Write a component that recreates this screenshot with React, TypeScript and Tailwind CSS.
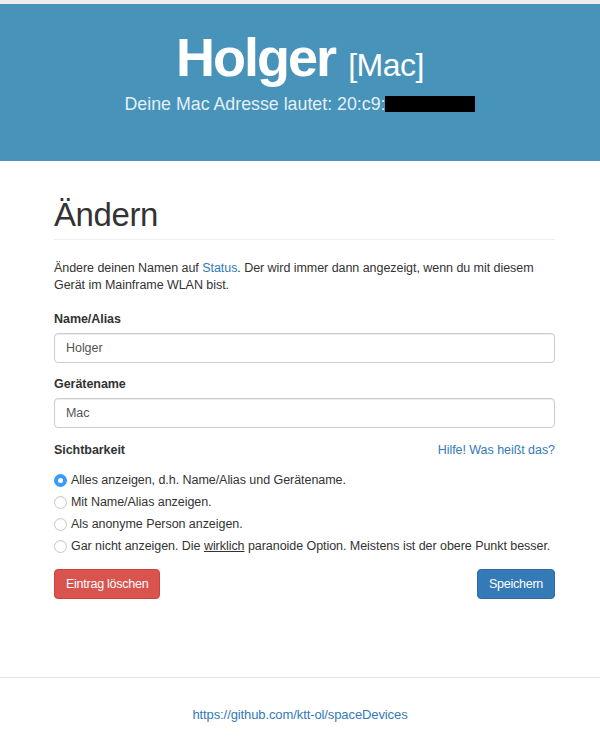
import React from "react";

export default function App() {
  const options = [
    { label: <>Alles anzeigen, d.h. Name/Alias und Gerätename.</>, checked: true },
    { label: <>Mit Name/Alias anzeigen.</>, checked: false },
    { label: <>Als anonyme Person anzeigen.</>, checked: false },
    {
      label: (
        <>
          Gar nicht anzeigen. Die <span className="underline">wirklich</span> paranoide Option. Meistens ist der obere Punkt besser.
        </>
      ),
      checked: false,
    },
  ];
  return (
    <div className="min-h-screen bg-white font-['Liberation_Sans',Arial,sans-serif] text-[#333]">
      <div className="h-[4px] bg-[#ececec]" />
      <div className="h-[157px] bg-[#4893ba] text-center text-white">
        <div className="pt-[22px] text-[54px] leading-[62px] font-bold tracking-[-2px]">
          Holger <span className="text-[32px] font-normal tracking-[-0.5px]">[Mac]</span>
        </div>
        <div className="mt-[-3px] flex items-center justify-center text-[17.8px] leading-[22px] text-[#e4eff6]">
          <span>Deine Mac Adresse lautet: 20:c9:</span>
          <span className="inline-block h-[16px] w-[90px] bg-black" />
        </div>
      </div>

      <div className="ml-[54px] w-[501px] text-[12.5px] tracking-[-0.05px]">
        <h1 className="mt-[34px] border-b border-[#eee] pb-[4px] text-[33px] leading-[40px] font-normal tracking-[-0.4px]">Ändern</h1>
        <p className="mt-[20px] leading-[17px]">
          Ändere deinen Namen auf <a className="text-[#337ab7]">Status</a>. Der wird immer dann angezeigt, wenn du mit diesem Gerät im Mainframe WLAN bist.
        </p>

        <div className="mt-[17px] leading-[17px] font-bold">Name/Alias</div>
        <div className="mt-[5px] flex h-[30px] items-center rounded-[4px] border border-[#ccc] px-[11px] text-[#555] shadow-[inset_0_1px_1px_rgba(0,0,0,0.075)]">
          Holger
        </div>

        <div className="mt-[13px] leading-[17px] font-bold">Gerätename</div>
        <div className="mt-[5px] flex h-[30px] items-center rounded-[4px] border border-[#ccc] px-[11px] text-[#555] shadow-[inset_0_1px_1px_rgba(0,0,0,0.075)]">
          Mac
        </div>

        <div className="mt-[14px] flex justify-between leading-[17px]">
          <span className="font-bold">Sichtbarkeit</span>
          <a className="text-[#337ab7]">Hilfe! Was heißt das?</a>
        </div>

        <div className="mt-[10px] flex flex-col">
          {options.map((o, i) => (
            <div key={i} className="flex h-[22px] items-center whitespace-nowrap">
              {o.checked ? (
                <span className="flex h-[13px] w-[13px] shrink-0 items-center justify-center rounded-full bg-[#3b99fc]">
                  <span className="h-[5px] w-[5px] rounded-full bg-white" />
                </span>
              ) : (
                <span className="h-[13px] w-[13px] shrink-0 rounded-full border border-[#c8c8c8] bg-white shadow-[inset_0_1px_1px_rgba(0,0,0,0.05)]" />
              )}
              <span className="ml-[4px]">{o.label}</span>
            </div>
          ))}
        </div>

        <div className="mt-[12px] flex justify-between tracking-[-0.25px]">
          <button className="h-[30px] rounded-[4px] border border-[#d43f3a] bg-[#d9534f] px-[11px] text-white">
            Eintrag löschen
          </button>
          <button className="h-[30px] rounded-[4px] border border-[#2e6da4] bg-[#337ab7] px-[11px] text-white">
            Speichern
          </button>
        </div>
      </div>

      <div className="mt-[78px] border-t border-[#e5e5e5] pt-[28px] pb-[20px] text-center text-[13px] leading-[17px] tracking-[-0.1px]">
        <a className="text-[#337ab7]">https://github.com/ktt-ol/spaceDevices</a>
      </div>
    </div>
  );
}
